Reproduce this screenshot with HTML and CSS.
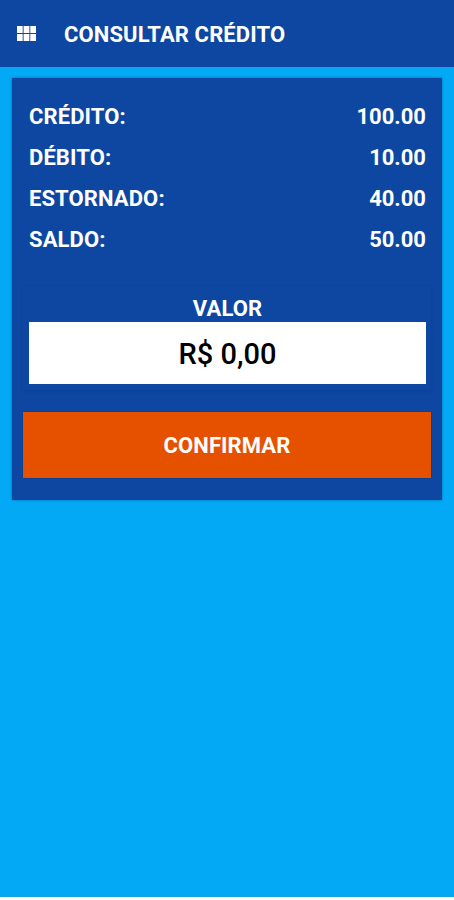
FILE: index.html
```html
<!DOCTYPE html>
<html lang="pt-BR">
<head>
<meta charset="utf-8">
<title>Consultar crédito</title>
<link rel="stylesheet" href="styles.css">
</head>
<body>
<header class="toolbar">
  <svg class="menu-icon" viewBox="0 0 19 15" aria-hidden="true">
    <path d="M0 0h5.7v7H0zM6.6 0h5.8v7H6.6zM13.3 0H19v7h-5.7zM0 8h5.7v7H0zM6.6 8h5.8v7H6.6zM13.3 8H19v7h-5.7z"/>
  </svg>
  <h1 class="title">CONSULTAR CRÉDITO</h1>
</header>
<main class="content">
  <section class="card">
    <dl class="summary">
      <div class="row"><dt>CRÉDITO:</dt><dd>100.00</dd></div>
      <div class="row"><dt>DÉBITO:</dt><dd>10.00</dd></div>
      <div class="row"><dt>ESTORNADO:</dt><dd>40.00</dd></div>
      <div class="row"><dt>SALDO:</dt><dd>50.00</dd></div>
    </dl>
    <div class="field">
      <div class="label">VALOR</div>
      <div class="input">R$ 0,00</div>
    </div>
    <button class="confirm" type="button">CONFIRMAR</button>
  </section>
</main>
</body>
</html>
```
FILE: styles.css
```css
* { box-sizing: border-box; margin: 0; padding: 0; }
body {
  height: 900px;
  display: flex;
  flex-direction: column;
  overflow: hidden;
  background: #fff;
  color: #fff;
  font-family: Roboto, sans-serif;
  font-size: 22px;
  font-weight: 700;
}
.toolbar {
  height: 67px;
  display: flex;
  align-items: center;
  gap: 28.5px;
  padding: 2px 16.5px 0;
  background: #0d47a1;
}
.menu-icon { width: 19px; height: 15px; margin-top: -2px; fill: #fff; }
.title { font-size: 22px; line-height: 26px; letter-spacing: .12px; white-space: nowrap; }
.content {
  height: 830px;
  padding: 11px 12px 0;
  background: #03a9f4;
  border-bottom: 2px solid #16a4dc;
}
.card {
  height: 422px;
  padding: 18px 11px 0;
  background: #0d47a1;
  box-shadow: 0 0 2px rgba(0, 30, 80, .5);
}
.summary { padding: 0 5px 0 6px; }
.row { height: 41px; display: flex; justify-content: space-between; line-height: 42px; }
.row dt { letter-spacing: .1px; }
.field {
  height: 104px;
  margin-top: 26px;
  padding: 8px 5px 0 6px;
  box-shadow: 0 1px 3px rgba(0, 20, 80, .16);
}
.label { line-height: 30px; height: 28px; text-align: center; letter-spacing: .1px; }
.input {
  height: 62px;
  line-height: 65px;
  text-align: center;
  background: #fff;
  color: #000;
  font-size: 29px;
  font-weight: 500;
}
.confirm {
  display: block;
  width: 100%;
  height: 66px;
  margin-top: 22px;
  padding-top: 1px;
  border: 0;
  background: #e65100;
  box-shadow: 0 0 1px rgba(0, 0, 0, .45);
  color: #fff;
  font: inherit;
  letter-spacing: .1px;
}
```
